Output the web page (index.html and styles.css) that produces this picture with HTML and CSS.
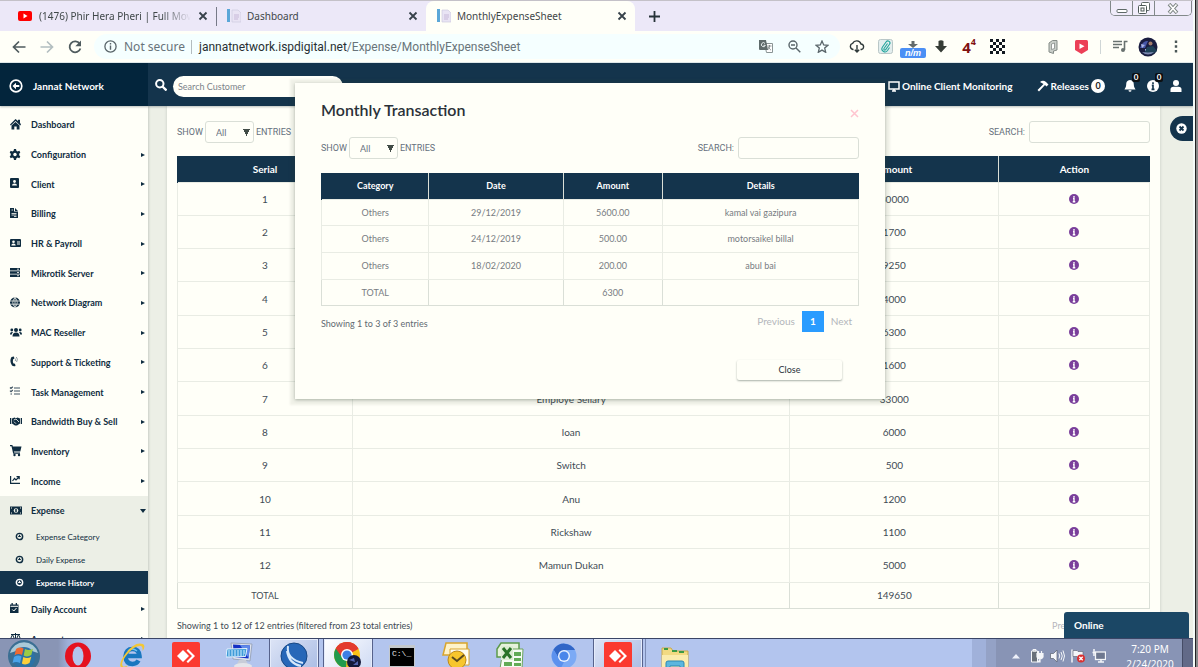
FILE: index.html
```html
<!DOCTYPE html>
<html lang="en">
<head>
<meta charset="utf-8">
<title>MonthlyExpenseSheet</title>
<link rel="stylesheet" href="styles.css">
</head>
<body>
<svg class="defs" aria-hidden="true">
  <symbol id="close" viewBox="0 0 10 10"><path d="M1.5 1.5l7 7m0-7l-7 7" stroke="currentColor" stroke-width="1.8" fill="none"/></symbol>
  <symbol id="doc" viewBox="0 0 14 14"><path d="M0 0h3v13H0z" fill="#5ba7d8"/><path d="M5 1h6l3 3v9H5z" fill="#e9e4f4" stroke="#cfcbe0" stroke-width=".7"/><path d="M7 6h5M7 8h5M7 10h4" stroke="#c7b8d8"/></symbol>
  <symbol id="info" viewBox="0 0 16 16"><circle cx="8" cy="8" r="8" fill="currentColor"/><path d="M8 3v2.4M6.4 7.2H8v5M6 12.4h4" stroke="var(--mark)" stroke-width="2.2" fill="none"/></symbol>
  <symbol id="anydesk" viewBox="0 0 28 28"><rect width="28" height="28" rx="2" fill="#fb3a30"/><path d="M5 14l6-6 6 6-6 6z" fill="#fff"/><path d="M14.500 8.500l1.500-1.500 7 7-7 7-1.500-1.500L20 14z" fill="#fff"/></symbol>
  <symbol id="ring" viewBox="0 0 10 10"><circle cx="5" cy="5" r="3.500" fill="none" stroke="currentColor" stroke-width="1.600"/><path d="M5 3v2.600M3.500 5h3" stroke="currentColor" stroke-width="1.200"/></symbol>
</svg>

<div class="screen">
<div class="window">

  <div class="tabs">
    <div class="tab">
      <svg width="14" height="10" viewBox="0 0 14 10"><rect width="14" height="10" rx="2" fill="#f00"/><path d="M5.500 2.500v5L9.500 5z" fill="#fff"/></svg>
      <span class="tab-title fade">(1476) Phir Hera Pheri | Full Movi</span>
      <button class="plain" aria-label="Close tab"><svg width="10" height="10"><use href="#close"/></svg></button>
    </div>
    <div class="tab">
      <svg width="14" height="14"><use href="#doc"/></svg>
      <span class="tab-title">Dashboard</span>
      <button class="plain" aria-label="Close tab"><svg width="10" height="10"><use href="#close"/></svg></button>
    </div>
    <div class="tab active">
      <svg width="14" height="14"><use href="#doc"/></svg>
      <span class="tab-title">MonthlyExpenseSheet</span>
      <button class="plain" aria-label="Close tab"><svg width="10" height="10"><use href="#close"/></svg></button>
    </div>
    <button class="plain new-tab" aria-label="New tab"><svg width="11" height="11" viewBox="0 0 11 11"><path d="M5.500 0v11M0 5.500h11" stroke="#263238" stroke-width="1.800"/></svg></button>
    <div class="controls">
      <button aria-label="Minimize"><svg width="12" height="12" viewBox="0 0 12 12"><rect x="1" y="7.500" width="10" height="3" rx="1" fill="#fff" stroke="#5f6a68"/></svg></button>
      <button aria-label="Restore"><svg width="12" height="12" viewBox="0 0 12 12"><rect x="3.500" y=".5" width="8" height="8" rx="1" fill="#fff" stroke="#5f6a68"/><rect x=".5" y="3.500" width="8" height="8" rx="1" fill="#fff" stroke="#4c5856"/><rect x="3" y="6" width="3" height="3" fill="none" stroke="#4c5856"/></svg></button>
      <button class="wide" aria-label="Close window"><svg width="12" height="11" viewBox="0 0 12 11"><path d="M2 1l8 9M10 1l-8 9" stroke="#7f8785" stroke-width="3.600"/><path d="M2.500 1.500l7 8M9.500 1.500l-7 8" stroke="#fff" stroke-width="1.600"/></svg></button>
    </div>
  </div>

  <div class="toolbar">
    <button class="plain slot" aria-label="Back"><svg width="14" height="14" viewBox="0 0 14 14"><path d="M13.500 7H2M7 1.500L1.500 7 7 12.500" fill="none" stroke="#4f5b5e" stroke-width="1.700"/></svg></button>
    <button class="plain slot" aria-label="Forward"><svg width="14" height="14" viewBox="0 0 14 14"><path d="M.5 7H12M7 1.500L12.500 7 7 12.500" fill="none" stroke="#b3bec0" stroke-width="1.700"/></svg></button>
    <button class="plain slot" aria-label="Reload"><svg width="14" height="14" viewBox="0 0 14 14"><path d="M11.700 3.700A5.500 5.500 0 1 0 12.400 8.500" fill="none" stroke="#4f5b5e" stroke-width="1.800"/><path d="M13 .5v5.700H7.300z" fill="#4f5b5e"/></svg></button>
    <div class="omnibox">
      <svg width="13" height="13" viewBox="0 0 13 13"><circle cx="6.500" cy="6.500" r="5.600" fill="none" stroke="#59656a" stroke-width="1.300"/><path d="M6.500 3v1.500M6.500 5.600v4.200" stroke="#59656a" stroke-width="1.400"/></svg>
      <span class="secure">Not secure</span>
      <span class="url"><b>jannatnetwork.ispdigital.net</b>/Expense/MonthlyExpenseSheet</span>
      <button class="plain slot" aria-label="Translate"><svg width="14" height="13" viewBox="0 0 14 13"><path d="M5.500 3.500h8v9h-6z" fill="#fff" stroke="#8a9494"/><path d="M8.500 6h4M10.500 5v1c0 2-1 3-2 4M9.500 7c.5 1.500 1.500 2.500 2.500 3" fill="none" stroke="#6f7979" stroke-width=".8"/><path d="M0 0h7l2 10H1a1 1 0 0 1-1-1z" fill="#5f6b6b"/><path d="M6 3.500a2 2 0 1 0 .3 1.800H4.500" fill="none" stroke="#e8f0f0"/></svg></button>
      <button class="plain slot" aria-label="Zoom"><svg width="13" height="13" viewBox="0 0 13 13"><circle cx="5" cy="5" r="4" fill="none" stroke="#59656a" stroke-width="1.400"/><path d="M8 8l4.300 4.300M3 5h4" stroke="#59656a" stroke-width="1.400"/></svg></button>
      <button class="plain slot" aria-label="Bookmark"><svg width="14" height="13" viewBox="0 0 14 13"><path d="M7 1l1.700 3.900 4.200.4-3.200 2.800 1 4.200L7 10.100l-3.700 2.200 1-4.200L1.100 5.300l4.200-.4z" fill="none" stroke="#59656a" stroke-width="1.300"/></svg></button>
    </div>
    <div class="extensions">
      <button class="plain slot" aria-label="Cloud download"><svg width="16" height="13" viewBox="0 0 16 13"><path d="M4.500 9.500H4A3.200 3.200 0 0 1 3.600 3.300 4.600 4.600 0 0 1 12 4a2.800 2.800 0 0 1 .5 5.500h-1M8 5v7M5.800 9.700L8 12l2.200-2.300" fill="none" stroke="#2f3a3a" stroke-width="1.400"/></svg></button>
      <button class="plain slot" aria-label="Attachments"><svg width="15" height="15" viewBox="0 0 15 15"><rect x=".5" y=".5" width="14" height="14" rx="2" fill="#e3eeee" stroke="#b9c7c7"/><path d="M9.500 4.500L6 9.500a1 1 0 0 0 1.500 1.300l4-5.500a2 2 0 0 0-3.300-2.500L4.500 8a3 3 0 0 0 5 3.500l2-3" fill="none" stroke="#22a59c" stroke-width="1.100"/></svg></button>
      <button class="plain slot stack" aria-label="Download manager"><svg width="10" height="7" viewBox="0 0 10 7"><path d="M3.500 0h3v3H10L5 7 0 3h3.500z" fill="#626a6a"/></svg><span class="nm">n/m</span></button>
      <button class="plain slot" aria-label="Downloads"><svg width="12" height="13" viewBox="0 0 12 13"><path d="M3.500 1q2.500-1.500 5 0v5H12l-6 6.500L0 6h3.500z" fill="#363c36"/></svg></button>
      <button class="plain slot four" aria-label="Four">4<sup>4</sup></button>
      <button class="plain slot" aria-label="Checkers"><svg width="15" height="15" viewBox="0 0 5 5"><path fill="#111820" d="M0 0h1v1H0zM2 0h1v1H2zM4 0h1v1H4zM1 1h1v1H1zM3 1h1v1H3zM0 2h1v1H0zM2 2h1v1H2zM4 2h1v1H4zM1 3h1v1H1zM3 3h1v1H3zM0 4h1v1H0zM2 4h1v1H2zM4 4h1v1H4z"/></svg></button>
      <span class="slot"></span>
      <button class="plain slot" aria-label="Reader"><svg width="10" height="14" viewBox="0 0 10 14"><path d="M1 3l3.500-2.500h4.500v9.500L5.500 11v2.500L1 12z" fill="#c9cec9" stroke="#858c88"/><path d="M3.500 4l3-1v5.500l-3 1z" fill="#fff" stroke="#858c88" stroke-width=".8"/></svg></button>
      <button class="plain slot" aria-label="Video"><svg width="13" height="14" viewBox="0 0 13 14"><path d="M0 1.500Q0 0 1.500 0h10Q13 0 13 1.500V10L6.500 14 0 10z" fill="#ec4057"/><path d="M4.500 3.500v5.500L9.500 6.200z" fill="#fff"/></svg></button>
      <span class="bar"></span>
      <button class="plain slot" aria-label="Playlist"><svg width="15" height="13" viewBox="0 0 15 13"><path d="M0 1.500h9M0 4.500h9M0 7.500h6" stroke="#68716f" stroke-width="1.400"/><path d="M11.500 10V1.500H14.500" fill="none" stroke="#68716f" stroke-width="1.600"/><circle cx="10" cy="10" r="2" fill="#68716f"/></svg></button>
      <button class="plain slot" aria-label="Profile"><svg width="20" height="20" viewBox="0 0 20 20"><circle cx="10" cy="10" r="9.500" fill="#1a1d40"/><path d="M2 11q3-8 8-7l-3 7z" fill="#4656a8"/><path d="M3 7l4 1-3 3zM7 12h3v2H7z" fill="#a9b4e2"/><circle cx="12.500" cy="6.500" r="2" fill="#a47d6c"/><path d="M9 10l6-1 4 5-5 3H6z" fill="#1f4258"/><path d="M4 15q6 5 12 0l-6 .5z" fill="#7c87b0"/></svg></button>
      <button class="plain slot" aria-label="Menu"><svg width="4" height="13" viewBox="0 0 4 13"><path d="M.8.500h2.400v2.400H.8zM.8 5.300h2.400v2.400H.8zM.8 10.100h2.400v2.400H.8z" fill="#4c5858"/></svg></button>
    </div>
  </div>

  <div class="page">
    <header class="topbar">
      <a class="brand" href="#home"><svg width="14" height="14" viewBox="0 0 14 14"><circle cx="7" cy="7" r="5.800" fill="none" stroke="#fff" stroke-width="1.700"/><path d="M3.500 7L7 3.800v2.200h3.300v2H7v2.200z" fill="#fff"/></svg>Jannat Network</a>
      <label class="find" for="customer" aria-label="Search customer"><svg width="12" height="12" viewBox="0 0 12 12"><circle cx="4.800" cy="4.800" r="3.700" fill="none" stroke="#fff" stroke-width="2"/><path d="M7.500 7.500l4 4" stroke="#fff" stroke-width="2.300"/></svg></label>
      <input class="customer" id="customer" type="text" placeholder="Search Customer">
      <nav class="topnav">
        <a class="monitor" href="#monitoring"><svg width="12" height="11" viewBox="0 0 12 11"><path d="M1 1h10v7H1zM4 10h4M6 8v2" fill="none" stroke="#fff" stroke-width="1.500"/></svg>Online Client Monitoring</a>
        <a class="releases" href="#releases"><svg width="12" height="12" viewBox="0 0 12 12"><path d="M3 2q3-2.500 6 0l2.500 2.500-2 2L8 5 2 11.500.5 10 6.500 4z" fill="#fff"/></svg>Releases<span class="pill">0</span></a>
        <a class="note" href="#alerts" aria-label="Alerts"><svg width="12" height="12" viewBox="0 0 12 12"><path d="M6 0c3 .5 3.800 2 3.800 4.500S11 8 11.500 9.500H.5C1 8 2.200 7 2.200 4.500S3 .5 6 0zM4.500 10.300h3a1.500 1.500 0 0 1-3 0z" fill="#fff"/></svg><span class="count">0</span></a>
        <a class="note" href="#notices" aria-label="Notices"><svg class="white-info" width="12" height="12"><use href="#info"/></svg><span class="count">0</span></a>
        <a class="note" href="#account" aria-label="Account"><svg width="12" height="12" viewBox="0 0 12 12"><circle cx="6" cy="3" r="3" fill="#fff"/><path d="M.5 12V9.500Q.5 6.800 3.500 6.800h5q3 0 3 2.700V12z" fill="#fff"/></svg></a>
      </nav>
    </header>

    <div class="body">
      <aside class="sidebar">
        <nav class="menu">
          <a href="#dashboard"><svg width="13" height="12" viewBox="0 0 13 12"><path d="M0 5.500L5.500 0l2.500 2V.8h2v3l1 1.700-.8 1L5.500 1.900.8 6.500zM1.500 6.600L5.500 3 9.500 6.600V10.500H6.700V7.500H4.300v3H1.500z"/></svg>Dashboard</a>
          <a class="more" href="#configuration"><svg width="13" height="12" viewBox="0 0 13 12"><path d="M4 0h2l.4 1.700 1.300.7 1.600-.6 1 1.700L9.200 4.700v1.600l1.100 1.200-1 1.700-1.600-.6-1.300.7L6 11H4l-.4-1.700-1.300-.7-1.600.6-1-1.700L.8 6.300V4.700L-.3 3.500l1-1.700 1.600.6 1.300-.7z"/><circle cx="5" cy="5.500" r="1.700" fill="#fffff8"/></svg>Configuration</a>
          <a class="more" href="#client"><svg width="13" height="12" viewBox="0 0 13 12"><rect width="9" height="10" rx="1"/><circle cx="4.500" cy="3.500" r="1.400" fill="#fffff8"/><path d="M2 7.500q0-2 2.500-2T7 7.500z" fill="#fffff8"/></svg>Client</a>
          <a class="more" href="#billing"><svg width="13" height="12" viewBox="0 0 13 12"><path d="M0 0h4v3.500h4V10H0zM5 0l3 3H5z"/><path d="M1.500 2h1.500M1.500 5.500h5M1.500 7h5M4 8.500h2.500" stroke="#fffff8" stroke-width=".8"/></svg>Billing</a>
          <a class="more" href="#payroll"><svg width="13" height="12" viewBox="0 0 13 12"><rect y="1" width="11" height="8" rx="1"/><circle cx="3.500" cy="3.700" r="1.300" fill="#fffff8"/><path d="M1.300 7.500q0-2 2.200-2t2.200 2zM7 3.500h3v1H7zM7 5.500h3v1H7z" fill="#fffff8"/></svg>HR &amp; Payroll</a>
          <a class="more" href="#mikrotik"><svg width="13" height="12" viewBox="0 0 13 12"><path d="M0 1h10v2.500H0zM0 4.300h10v2.500H0zM0 7.500h10V10H0z"/><path d="M7 2.200h2M7 5.500h2M7 8.700h2" stroke="#fffff8" stroke-width=".8"/></svg>Mikrotik Server</a>
          <a class="more" href="#network"><svg width="13" height="12" viewBox="0 0 13 12"><circle cx="5" cy="5.500" r="5"/><path d="M0 4h10M0 7.200h10M5 .5v10M5 .5q-4.500 5 0 10M5 .5q4.500 5 0 10" stroke="#fffff8" stroke-width=".7" fill="none"/></svg>Network Diagram</a>
          <a class="more" href="#reseller"><svg width="13" height="12" viewBox="0 0 13 12"><circle cx="6" cy="3" r="2"/><circle cx="1.800" cy="3" r="1.400"/><circle cx="10.200" cy="3" r="1.400"/><path d="M2.500 9.500Q2.500 5.500 6 5.500T9.500 9.500zM0 7q0-2 2-2h1Q2 6 1.800 7.500H0zM12 7q0-2-2-2H9q1 1 1.200 2.500H12z"/></svg>MAC Reseller</a>
          <a class="more" href="#support"><svg width="13" height="12" viewBox="0 0 13 12"><path d="M1.500 1L4 .5l.3 2L3 3.500q-.5 2 .5 4L5 7.700l.5 2.300q-2 .7-3.500-.5Q-1 5 1.500 1z"/><path d="M5 2.500q1 1 .3 2.500M6.300 1q2 2 .3 5" fill="none" stroke="#8e9aa3"/></svg>Support &amp; Ticketing</a>
          <a class="more" href="#task"><svg width="13" height="12" viewBox="0 0 13 12"><path d="M4 2h6M4 5h6M4 8h6M0 1.500l1 1L2.800.8M0 4.700l1 1 1.800-1.700M.5 8h1.500" stroke="#3e5261" stroke-width="1.200" fill="none"/></svg>Task Management</a>
          <a class="more" href="#bandwidth"><svg width="13" height="12" viewBox="0 0 13 12"><path d="M0 2h1.300v6H0zM10.700 2H12v6h-1.300zM2 2.500L4.500 1.500l1.500.7 1.500-.7 2.500 1v5L7 9.500H5L2 7.500z"/><path d="M3.700 4L6 3l3 3M4 5.700l2 2" stroke="#fffff8" stroke-width=".8" fill="none"/></svg>Bandwidth Buy &amp; Sell</a>
          <a class="more" href="#inventory"><svg width="13" height="12" viewBox="0 0 13 12"><path d="M0 0h2.400l.4 1.500H11.500L10.300 6.500H4l.2 1h5.800v1.200H3.200L1.500 1.200H0z"/><circle cx="4.500" cy="10" r="1.200"/><circle cx="9" cy="10" r="1.200"/></svg>Inventory</a>
          <a class="more" href="#income"><svg width="13" height="12" viewBox="0 0 13 12"><path d="M.6 1v7.400H10M2.500 6L4.500 3.500 6 5l3-3M6.500 1.700h2.700v2.500" fill="none" stroke="#0f2c40" stroke-width="1.200"/></svg>Income</a>
        </nav>
        <nav class="submenu">
          <a class="group" href="#expense"><svg width="13" height="12" viewBox="0 0 13 12"><rect y="1.500" width="12" height="8"/><circle cx="6" cy="5.500" r="2.300" fill="#ecefe6"/><path d="M1 3h1M1 8h1M10 3h1M10 8h1" stroke="#ecefe6"/><path d="M6 4v3" stroke="#0f2c40" stroke-width="1.500"/></svg>Expense</a>
          <a href="#category"><svg width="9" height="9"><use href="#ring"/></svg>Expense Category</a>
          <a href="#daily"><svg width="9" height="9"><use href="#ring"/></svg>Daily Expense</a>
          <a class="current" href="#history"><svg width="9" height="9"><use href="#ring"/></svg>Expense History</a>
        </nav>
        <nav class="menu rest">
          <a class="more" href="#account-daily"><svg width="13" height="12" viewBox="0 0 13 12"><path d="M0 1.500h1.500V0h1.300v1.500h2.900V0H7v1.500h1.500V10H0z"/><path d="M.5 3.300h7.500M2.300 6.500l1.500 1.500L6.500 5" stroke="#fffff8" fill="none"/></svg>Daily Account</a>
          <a class="more" href="#accounts"><svg width="13" height="12" viewBox="0 0 13 12"><path d="M5.500 0v10M1 1.500h9M3 10h5M2.500 1.500L.5 6h4zM8.500 1.500L6.500 6h4z" fill="none" stroke="#0f2c40"/></svg>Accounts</a>
        </nav>
      </aside>

      <main class="content">
        <section class="card">
          <div class="filters">
            <label for="len">SHOW</label>
            <select id="len"><option>All</option></select>
            <span>ENTRIES</span>
            <label class="push" for="filter">SEARCH:</label>
            <input id="filter" type="text">
          </div>
          <table class="grid main-grid">
            <colgroup><col class="c1"><col class="c2"><col class="c3"><col class="c4"></colgroup>
            <thead><tr><th>Serial</th><th>Details</th><th>Amount</th><th>Action</th></tr></thead>
            <tbody>
              <tr><td>1</td><td></td><td>80000</td><td><svg class="act"><use href="#info"/></svg></td></tr>
              <tr><td>2</td><td></td><td>1700</td><td><svg class="act"><use href="#info"/></svg></td></tr>
              <tr><td>3</td><td></td><td>9250</td><td><svg class="act"><use href="#info"/></svg></td></tr>
              <tr><td>4</td><td></td><td>4000</td><td><svg class="act"><use href="#info"/></svg></td></tr>
              <tr><td>5</td><td></td><td>6300</td><td><svg class="act"><use href="#info"/></svg></td></tr>
              <tr><td>6</td><td></td><td>1600</td><td><svg class="act"><use href="#info"/></svg></td></tr>
              <tr><td>7</td><td>Employe Sellary</td><td>33000</td><td><svg class="act"><use href="#info"/></svg></td></tr>
              <tr><td>8</td><td>loan</td><td>6000</td><td><svg class="act"><use href="#info"/></svg></td></tr>
              <tr><td>9</td><td>Switch</td><td>500</td><td><svg class="act"><use href="#info"/></svg></td></tr>
              <tr><td>10</td><td>Anu</td><td>1200</td><td><svg class="act"><use href="#info"/></svg></td></tr>
              <tr><td>11</td><td>Rickshaw</td><td>1100</td><td><svg class="act"><use href="#info"/></svg></td></tr>
              <tr><td>12</td><td>Mamun Dukan</td><td>5000</td><td><svg class="act"><use href="#info"/></svg></td></tr>
            </tbody>
            <tfoot><tr><td>TOTAL</td><td></td><td>149650</td><td></td></tr></tfoot>
          </table>
          <div class="summary">
            <span>Showing 1 to 12 of 12 entries (filtered from 23 total entries)</span>
            <a class="prev" href="#prev">Previous</a>
          </div>
        </section>
      </main>
      <button class="settings" aria-label="Settings"><svg width="11" height="11" viewBox="0 0 11 11"><circle cx="5.500" cy="5.500" r="5.200" fill="#fff"/><path d="M3.500 3.500l4 4M7.500 3.500l-4 4" stroke="#14344c" stroke-width="1.800"/></svg></button>
      <button class="online">Online</button>
    </div>

    <div class="modal" role="dialog" aria-labelledby="modal-title">
      <div class="modal-head">
        <h2 id="modal-title">Monthly Transaction</h2>
        <button class="plain dismiss" aria-label="Dismiss"><svg width="9" height="9" viewBox="0 0 9 9"><path d="M1 1l7 7M8 1L1 8" stroke="#ffc5cf" stroke-width="1.500"/></svg></button>
      </div>
      <div class="filters">
        <label for="mlen">SHOW</label>
        <select id="mlen"><option>All</option></select>
        <span>ENTRIES</span>
        <label class="push" for="mfilter">SEARCH:</label>
        <input id="mfilter" type="text">
      </div>
      <table class="grid modal-grid">
        <colgroup><col class="m1"><col class="m2"><col class="m3"><col class="m4"></colgroup>
        <thead><tr><th>Category</th><th>Date</th><th>Amount</th><th>Details</th></tr></thead>
        <tbody>
          <tr><td>Others</td><td>29/12/2019</td><td>5600.00</td><td>kamal vai gazipura</td></tr>
          <tr><td>Others</td><td>24/12/2019</td><td>500.00</td><td>motorsaikel billal</td></tr>
          <tr><td>Others</td><td>18/02/2020</td><td>200.00</td><td>abul bai</td></tr>
        </tbody>
        <tfoot><tr><td>TOTAL</td><td></td><td>6300</td><td></td></tr></tfoot>
      </table>
      <div class="pager">
        <span class="shown">Showing 1 to 3 of 3 entries</span>
        <a href="#previous">Previous</a><a class="on" href="#1">1</a><a href="#next">Next</a>
      </div>
      <div class="modal-foot"><button class="close-btn">Close</button></div>
    </div>
  </div>

  <div class="taskbar">
    <button class="plain start" aria-label="Start"><svg width="34" height="34" viewBox="0 0 34 34"><circle cx="17" cy="17" r="16" fill="#3b6f93"/><path d="M3 14a14.500 14.500 0 0 1 28 0Q17 8 3 14z" fill="#a9c9d8"/><circle cx="17" cy="19" r="11" fill="#2c72a6"/><path d="M9 10q4-2.500 7.500-.5L15 16q-4-2-7.500.5z" fill="#ef6a32"/><path d="M18 10q4 2 8-.3L24.300 16q-4 2.500-7.600.5z" fill="#9ccb45"/><path d="M7 18q4-2.500 7.500-.5L13 24q-4-2-7.500 0z" fill="#4ba3e8"/><path d="M16.300 18q4 2 8-.3L22.500 24q-4 2.500-7.600.5z" fill="#fccf3c"/></svg></button>
    <button class="task" aria-label="Opera"><svg width="28" height="28" viewBox="0 0 28 28"><ellipse cx="14" cy="14" rx="13" ry="13.500" fill="#e5121f"/><ellipse cx="14" cy="14" rx="5.500" ry="9.500" fill="#b3c4ec"/></svg></button>
    <button class="task" aria-label="Internet Explorer"><svg width="28" height="28" viewBox="0 0 28 28"><path d="M21.500 18.500a6.500 6.500 0 0 1-12-3.500h13.500a9 9 0 0 0-1-4.500" fill="none"/><path d="M20.500 18.500Q18.500 22 14.500 22 8 22 7.500 14.500 8 7 14.500 7q6.500 0 7 7H8" fill="none" stroke="#1977bf" stroke-width="4.500"/><path d="M10 9q4-4 9 0" fill="none" stroke="#71c3f2" stroke-width="1.500"/><path d="M4 26Q-1 23 8 11T25 2q3 2-.5 7 .5-4.500-1.500-5Q17 3 9.500 12T5 24.500q2 .5 5-1-4 4-6 2.500z" fill="#f3c736"/></svg></button>
    <button class="task" aria-label="AnyDesk"><svg width="28" height="28"><use href="#anydesk"/></svg></button>
    <button class="task" aria-label="Remote keyboard"><svg width="28" height="28" viewBox="0 0 28 28"><path d="M5 1l21 1-2 17-17-2z" fill="#dfe4ee" stroke="#9aa6bd"/><path d="M7 2.500l17 1-1.500 13L8 15z" fill="#1430c4"/><path d="M14 3l10 .6L22.500 16z" fill="#5f89ea"/><path d="M13 18h7l2 5-11-1z" fill="#c8cdd8"/><ellipse cx="17" cy="24" rx="9" ry="3" fill="#e3e5ea"/><path d="M1 7l20-.5-1.500 8L0 15z" fill="#3f9bd8" stroke="#e4f4ff"/><path d="M2 9h17M2 11h17M2 13h16" stroke="#d6efff" stroke-dasharray="2 1"/></svg></button>
    <button class="task on-b" aria-label="Winbox"><svg width="28" height="28" viewBox="0 0 28 28"><circle cx="14" cy="14" r="13" fill="#2667b8" stroke="#174885"/><path d="M8 4Q6 17 23 21M7 9q2 13 14 15" fill="none" stroke="#d5e8fb" stroke-width="2"/></svg></button>
    <button class="task on-a" aria-label="Chrome"><svg width="30" height="30" viewBox="0 0 30 30"><circle cx="14" cy="14" r="13" fill="#fbc116"/><path d="M14 14L2.800 7.500A13 13 0 0 1 25.500 8z" fill="#e33b2e"/><path d="M14 14L2.800 7.500A13 13 0 0 0 13 27z" fill="#229a4d"/><path d="M14 7.500h11.300A13 13 0 0 0 2.800 7.500L8 15z" fill="#e33b2e"/><circle cx="14" cy="14" r="6" fill="#fff"/><circle cx="14" cy="14" r="4.600" fill="#3d7fe6"/><circle cx="21" cy="21" r="7" fill="#14193a"/><path d="M16 19l5-2 1 4zM20 24l5-4v4z" fill="#5364b0"/></svg></button>
    <button class="task" aria-label="Command prompt"><span class="cmd">C:\_</span></button>
    <button class="task" aria-label="Outlook"><svg width="28" height="28" viewBox="0 0 28 28"><path d="M4 1h21v12H1z" fill="#fff3c9" stroke="#d9a52c" stroke-width="1.500"/><path d="M8 7h19v16H8z" fill="#fffdf0" stroke="#d9a52c"/><circle cx="15" cy="18" r="9" fill="#f7c62c" stroke="#bd8817"/><path d="M10 15l5 4 7-6" fill="none" stroke="#5a4a1e" stroke-width="2"/></svg></button>
    <button class="task" aria-label="Excel"><svg width="28" height="28" viewBox="0 0 28 28"><path d="M5 1h18v14H1v-8z" fill="#e6f2dc" stroke="#5c9a4b" stroke-width="1.500"/><path d="M7 7h20l-1 20H4z" fill="#f6fbf3" stroke="#6ba45b"/><path d="M18 10h7v4h-7zM18 16h7v3h-7zM18 21h7v3h-7zM8 20h8v4H8z" fill="#62ab56"/><rect x="5" y="4" width="12" height="14" fill="#dcedd2"/><path d="M7 6l8 10M15 6l-8 10" stroke="#287326" stroke-width="3"/></svg></button>
    <button class="task" aria-label="Chromium"><svg width="28" height="28" viewBox="0 0 28 28"><circle cx="14" cy="14" r="12.500" fill="#7caaf5"/><path d="M14 8h11A12.500 12.500 0 0 0 3.500 7.500L8 15z" fill="#3166c7"/><path d="M3.500 7.500L9 17l5 3-3 6A12.500 12.500 0 0 1 3.500 7.500z" fill="#5b91ee"/><circle cx="14" cy="14" r="6" fill="#e8f1ff"/><circle cx="14" cy="14" r="4.600" fill="#4a86ea"/></svg></button>
    <button class="task on-b" aria-label="AnyDesk session"><svg width="28" height="28"><use href="#anydesk"/></svg></button>
    <button class="task folder" aria-label="Explorer"><svg width="28" height="26" viewBox="0 0 28 26"><path d="M1 2h9l2 3h15v21H1z" fill="#f2da82" stroke="#c9a94a"/><path d="M3 3h4M11 5h5M18 6h5" stroke="#3b9a45" stroke-width="2"/><path d="M1 9h26v17H1z" fill="#fbecad"/><path d="M5 26V17q0-2 2-2h14q2 0 2 2v9h-4v-6H9v6z" fill="#5bb6de" stroke="#2c87b4"/></svg></button>
    <div class="tray">
      <svg width="8" height="5" viewBox="0 0 8 5"><path d="M0 4.500L4 0l4 4.500z" fill="#eef1fa"/></svg>
      <svg width="14" height="14" viewBox="0 0 14 14"><path d="M1.500 2h6v11h-6zM3 .5h3V2H3z" fill="#68707a" stroke="#f4f6f9"/><path d="M7 4.500h6V8q-1 2-3 2t-3-2zM8.500 2v2.500M11.500 2v2.500M10 10v3H7" fill="#f4f6f9" stroke="#f4f6f9" stroke-width="1.200"/></svg>
      <svg width="15" height="14" viewBox="0 0 15 14"><path d="M.5 4.500h3L7 1v12L3.500 9.500h-3z" fill="#f4f6f9" stroke="#59606f" stroke-width=".7"/><path d="M9 4.500q1.500 2.500 0 5M11 3q2.500 4 0 8M13 1.500q3 5.500 0 11" fill="none" stroke="#f4f6f9"/></svg>
      <svg width="15" height="14" viewBox="0 0 15 14"><path d="M1 .5v13" stroke="#f4f6f9" stroke-width="1.500"/><path d="M2 1.500h4l1 1h5v6H7l-1-1H2z" fill="#f4f6f9" stroke="#59606f" stroke-width=".6"/><circle cx="10" cy="9.500" r="4" fill="#d93030"/><path d="M8.300 7.800l3.400 3.400M11.700 7.800l-3.400 3.400" stroke="#fff" stroke-width="1.300"/></svg>
      <svg width="14" height="14" viewBox="0 0 14 14"><rect x="3.500" y="3" width="10" height="7.500" fill="#6e7890" stroke="#f4f6f9" stroke-width="1.300"/><path d="M6 13h6M9 10v3M2 0v7M.5 3.500h3" stroke="#f4f6f9" stroke-width="1.500"/></svg>
      <div class="clock"><span>7:20 PM</span><span>2/24/2020</span></div>
      <span class="peek"></span>
    </div>
  </div>
</div>
</div>
</body>
</html>
```
FILE: styles.css
```css
* { box-sizing: border-box; }
:root {
  --paper: #fffff8;
  --navy: #14344c;
  --ink: #0f2c40;
  --mist: #ecefe6;
  --line: #e9ece4;
  --rule: #dadfd7;
}
html, body { height: 100%; margin: 0; }
body { overflow: hidden; background: var(--paper); font-family: Lato, sans-serif; font-size: 10px; color: #414b55; }
a { color: inherit; text-decoration: none; }
button, input, select { font: inherit; color: inherit; }
svg { flex: none; display: block; }
.defs { position: absolute; width: 0; height: 0; }
.plain { border: 0; background: none; padding: 0; display: flex; align-items: center; justify-content: center; color: #37424a; }
.screen { height: 100%; padding-right: 5px; background: linear-gradient(to left, #8a8a8a 2px, #222 2px 3px, #f4fbf8 3px); }
.window { height: 100%; display: flex; flex-direction: column; overflow: hidden; }

/* browser chrome */
.tabs { flex: none; height: 31px; display: flex; background: #ece8f8; border-top: 1px solid #c4c1c8; font-family: "Noto Sans", sans-serif; font-size: 10px; color: #3f4748; }
.tab { display: flex; align-items: center; width: 209px; padding: 0 8px 0 10px; gap: 6px; }
.tab:first-child { width: 217px; padding-left: 18px; gap: 7px; border-right: 1px solid transparent; border-image: linear-gradient(transparent 7px, #777a88 7px 24px, transparent 24px) 1; }
.tab.active { width: 209px; background: var(--paper); border-radius: 8px 8px 0 0; padding-left: 11px; }
.tab-title { flex: 1; min-width: 0; white-space: nowrap; overflow: hidden; }
.fade { -webkit-mask-image: linear-gradient(to left, transparent, #000 30px); mask-image: linear-gradient(to left, transparent, #000 30px); }
.new-tab { width: 38px; }
.controls { margin: 0 1px 0 auto; align-self: flex-start; display: flex; border: 1px solid #82898a; border-top: 0; border-radius: 0 0 5px 5px; overflow: hidden; }
.controls button { width: 22px; height: 14px; padding: 0; border: 0; border-right: 1px solid #82898a; background: #f0ecfa; display: flex; align-items: center; justify-content: center; }
.controls .wide { width: 36px; border: 0; }
.toolbar { flex: none; height: 32px; display: flex; align-items: center; padding: 0 3px 0 5px; background: var(--paper); border-bottom: 1px solid #e4ecec; font-family: "Noto Sans", sans-serif; }
.slot { flex: none; width: 28px; }
.omnibox { flex: 1; height: 25px; margin-left: 5px; padding: 0 4px 0 10px; display: flex; align-items: center; border-radius: 13px; background: #f5ffff; white-space: nowrap; font-size: 12px; }
.secure { margin-left: 7px; padding-right: 6px; border-right: 1px solid #b3bcbf; line-height: 14px; color: #68737a; }
.url { flex: 1; padding-left: 7px; font-family: Roboto, sans-serif; color: #69747a; }
.url b { font-weight: 400; color: #272f33; }
.extensions { display: flex; align-items: center; padding-left: 3px; }
.bar { width: 1px; height: 14px; margin: 0 5px; background: #cfd6d6; }
.stack { flex-direction: column; height: 26px; padding-top: 6px; }
.nm { background: #4b8ff5; color: #fff; font: italic bold 9px/10px "Liberation Sans", sans-serif; padding: 0 5px; border-radius: 2px; }
.four { font: bold 15px/20px "Noto Sans", sans-serif; color: #801010; }
.four sup { font-size: 9px; line-height: 9px; align-self: flex-start; }

/* application */
.page { flex: 1; min-height: 0; position: relative; display: flex; flex-direction: column; }
.topbar { flex: none; height: 43px; display: flex; align-items: center; background: var(--navy); color: #fff; font-weight: 700; z-index: 1; box-shadow: 0 1px 2px rgba(20, 40, 50, .3); }
.brand { width: 148px; height: 100%; padding: 3px 0 0 9px; display: flex; align-items: center; gap: 10px; background: #03253c; }
.find { padding: 0 6px 0 7px; }
.customer { width: 170px; height: 21px; padding: 0 5px; border: 0; border-radius: 11px; background: var(--paper); font-weight: 400; font-size: 9px; margin-top: 3px; }
.customer::placeholder { color: #7d838a; }
.topnav { margin-left: auto; display: flex; align-items: center; padding: 3px 6px 0 0; }
.topnav a { display: flex; align-items: center; }
.monitor { gap: 2px; margin-right: 24px; }
.releases { gap: 2px; margin-right: 13px; }
.pill { width: 14px; height: 14px; border-radius: 50%; background: #fff; color: #222; font-size: 9px; line-height: 14px; text-align: center; }
.note { position: relative; width: 23px; justify-content: center; }
.count { position: absolute; left: 14px; top: -7px; width: 8px; height: 9px; border-radius: 2px; background: #0c0f12; font-size: 8px; line-height: 9px; text-align: center; }
.white-info { color: #fff; --mark: #14344c; }
.body { flex: 1; min-height: 0; position: relative; display: flex; overflow: hidden; background: var(--mist); }
.sidebar { width: 148px; flex: none; padding-top: 4px; background: var(--paper); box-shadow: 1px 0 2px #c9cec6; color: var(--ink); font-weight: 700; font-size: 9px; overflow: hidden; }
.menu { display: grid; grid-auto-rows: 1fr; height: 386px; }
.menu.rest { height: 60px; }
.menu a, .group { position: relative; display: flex; align-items: center; gap: 8px; padding-left: 10px; }
.menu svg, .group svg { fill: var(--ink); overflow: visible; }
.more::after { content: ""; margin-left: auto; margin-right: 3px; border: 2px solid transparent; border-left: 4px solid var(--ink); border-right: 0; }
.submenu { display: flex; flex-direction: column; background: var(--mist); }
.submenu a { height: 23px; display: flex; align-items: center; gap: 12px; padding-left: 15px; font-weight: 400; font-size: 8px; }
.submenu .group { height: 29px; gap: 8px; padding-left: 10px; font-weight: 700; font-size: 9px; }
.group::after { content: ""; margin-left: auto; margin-right: 2px; border: 3px solid transparent; border-top: 4px solid var(--ink); border-bottom: 0; }
.submenu .current { background: var(--navy); color: #fff; font-weight: 700; }
.content { flex: 1; min-width: 0; padding: 0 33px 0 19px; }
.card { min-height: 100%; padding: 15px 10px 0; background: var(--paper); box-shadow: 0 0 3px #c5cbc2; }
.filters { display: flex; align-items: center; height: 22px; gap: 2px; font-family: Roboto, sans-serif; font-size: 9px; color: #66717d; }
.filters select { appearance: none; width: 49px; height: 22px; padding: 0 10px; border: 1px solid var(--rule); border-radius: 3px; font-family: Lato, sans-serif; font-size: 9px; background: conic-gradient(from 333deg at 50% 100%, #414b46 54deg, transparent 54deg) 37px 7px / 7px 7px no-repeat var(--paper); }
.filters input { width: 121px; height: 22px; padding: 0 6px; border: 1px solid var(--rule); border-radius: 3px; background: var(--paper); }
.push { margin-left: auto; margin-right: 2px; }
.grid { width: 100%; border-collapse: collapse; table-layout: fixed; text-align: center; }
.grid th { height: 26px; padding: 0; background: var(--navy); color: #fff; border-left: 1px solid var(--rule); }
.grid th:first-child { border-left-color: var(--navy); }
.grid td { padding: 0; border: 1px solid var(--line); }
.grid tfoot td { height: 26px; border-color: var(--rule); }
.grid tfoot td:first-child { font-size: 9px; }
.main-grid { margin-top: 13px; }
.main-grid tbody { height: 400px; }
.c1 { width: 18%; }
.c2 { width: 45%; }
.c3 { width: 21.5%; }
.c4 { width: 15.5%; }
.act { width: 10px; height: 10px; margin: 0 auto; color: #7a3f9b; --mark: #fff; }
.summary { display: flex; justify-content: space-between; align-items: center; height: 34px; padding-right: 64px; font-size: 9px; }
.prev { color: #b6b6bc; }
.settings { position: absolute; right: 0; top: 10px; width: 23px; height: 25px; padding: 0 0 0 6px; border: 0; border-radius: 13px 0 0 13px; background: var(--navy); }
.online { position: absolute; right: 4px; bottom: 0; width: 125px; height: 26px; padding: 0 10px; border: 0; border-radius: 3px 3px 0 0; background: #1b4765; color: #fff; font-weight: 700; text-align: left; }

/* dialog */
.modal { position: absolute; left: 295px; top: 20px; width: 590px; padding: 16px 26px 19px; background: var(--paper); z-index: 2; box-shadow: 0 1px 3px rgba(40, 60, 40, .35), 0 1px 2px 5px rgba(60, 80, 50, .08); font-size: 9px; color: #777c82; }
.modal-head { display: flex; justify-content: space-between; height: 38px; }
.modal h2 { margin: 0; font-size: 16px; line-height: 22px; font-weight: 600; color: #2b3138; }
.dismiss { height: 29px; }
.modal-grid { margin-top: 14px; }
.modal-grid tbody { height: 80px; }
.m1 { width: 20%; }
.m2 { width: 25%; }
.m3 { width: 18.5%; }
.m4 { width: 36.5%; }
.pager { display: flex; align-items: center; margin-top: 5px; color: #b3b6bb; font-size: 10px; }
.shown { margin-right: auto; padding-top: 4px; color: #626a72; font-size: 9px; }
.pager a { padding: 0 7px; line-height: 21px; }
.pager .on { padding: 0 8px; background: #2a9cff; color: #fff; font-weight: 700; }
.modal-foot { display: flex; justify-content: flex-end; padding: 28px 17px 0; }
.close-btn { width: 105px; height: 20px; padding: 0; border: 0; border-radius: 2px; background: var(--paper); box-shadow: 0 1px 2px rgba(40, 60, 50, .4); color: #29323a; }

/* taskbar */
.taskbar { flex: none; height: 29px; display: flex; overflow: hidden; border-top: 1px solid #3a4566; background: linear-gradient(to right, #8995b5 0 58px, #9dafd8 68px, #b3c5ee 90px); }
.taskbar > button { height: 34px; flex: none; }
.start { width: 51px; padding-right: 3px; }
.task { width: 54px; padding: 0; border: 0; background: none; display: flex; align-items: center; justify-content: center; }
.taskbar > .on-a, .taskbar > .on-b { width: 50px; margin: 0 2px; border: 1px solid #56628c; border-top: 0; box-shadow: inset 0 0 0 1px #e5ecfb; background: linear-gradient(135deg, #fff, #cdd9f4); }
.taskbar > .on-b { background: linear-gradient(135deg, #dde4f6, #a9bce4); }
.folder { width: 58px; padding-top: 6px; border-left: 1px solid #7b8bb5; }
.cmd { width: 26px; height: 22px; padding-left: 2px; border: 1px solid #c3c8cc; border-top-width: 3px; background: #000; color: #e6e6e6; font: 8px/11px "Liberation Mono", monospace; text-align: left; white-space: nowrap; overflow: hidden; }
.tray { margin-left: auto; height: 34px; display: flex; align-items: center; gap: 7px; padding-left: 40px; background: linear-gradient(to right, #a0b1da 14px, #94a2c6 14px 24px, #8894b5 24px); color: #fff; }
.tray svg:first-child { margin-right: 4px; }
.tray { gap: 6px; }
.clock { display: flex; flex-direction: column; align-items: center; width: 58px; margin: 0 4px 0 9px; font: 10px/15px "Noto Sans", sans-serif; padding-top: 2px; }
.peek { width: 11px; height: 100%; margin-left: -7px; border-left: 1px solid #454c66; background: #626a88; }
```
